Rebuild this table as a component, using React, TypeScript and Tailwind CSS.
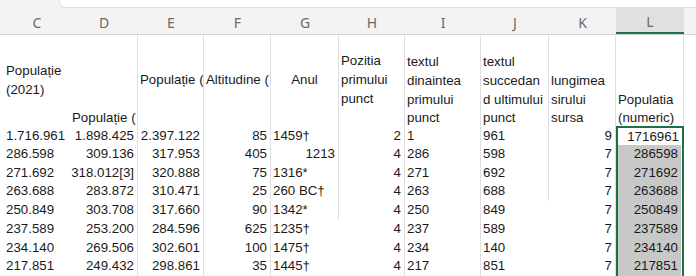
import React from "react";

type Align = "l" | "r" | "c";

// visible slice of the sheet: a sliver of B, then C..L, then the start of M
const colWidths = "grid-cols-[4px_66px_68px_66px_67px_68px_66px_76px_68px_67px_68px_1fr]";
const letters = ["", "C", "D", "E", "F", "G", "H", "I", "J", "K", "L", ""];

// default alignment for the data columns C..L
const colAlign: Align[] = ["l", "r", "r", "r", "l", "r", "l", "l", "r", "r"];

const rows: string[][] = [
  ["1.716.961", "1.898.425", "2.397.122", "85", "1459†", "2", "1", "961", "9", "1716961"],
  ["286.598", "309.136", "317.953", "405", "1213", "4", "286", "598", "7", "286598"],
  ["271.692", "318.012[3]", "320.888", "75", "1316*", "4", "271", "692", "7", "271692"],
  ["263.688", "283.872", "310.471", "25", "260 BC†", "4", "263", "688", "7", "263688"],
  ["250.849", "303.708", "317.660", "90", "1342*", "4", "250", "849", "7", "250849"],
  ["237.589", "253.200", "284.596", "625", "1235†", "4", "237", "589", "7", "237589"],
  ["234.140", "269.506", "302.601", "100", "1475†", "4", "234", "140", "7", "234140"],
  ["217.851", "249.432", "298.861", "35", "1445†", "4", "217", "851", "7", "217851"],
];

type HeaderCell = { lines: string[]; v: "center" | "bottom"; align?: Align };

const headers: HeaderCell[] = [
  { lines: ["Populație", "(2021)"], v: "center" },
  { lines: ["Populație ("], v: "bottom" },
  { lines: ["Populație ("], v: "center" },
  { lines: ["Altitudine ("], v: "center" },
  { lines: ["Anul"], v: "center", align: "c" },
  { lines: ["Pozitia", "primului", "punct"], v: "center" },
  { lines: ["textul", "dinaintea", "primului", "punct"], v: "bottom" },
  { lines: ["textul", "succedan", "d ultimului", "punct"], v: "bottom" },
  { lines: ["lungimea", "sirului", "sursa"], v: "bottom" },
  { lines: ["Populatia", "(numeric)"], v: "bottom" },
];

const grid = "border-[#dfdfdf]";

// vertical gridline to the right of column index (0 = C); the C/D line is not drawn
function hasRightLine(col: number, row: number) {
  if (col === 0) return false;
  if (col === 4 && row >= 6) return false;
  if (col === 7 && row >= 5) return false;
  return true;
}

function justify(a: Align) {
  if (a === "r") return "justify-end pr-[3px]";
  if (a === "c") return "justify-center";
  return "justify-start pl-[2px]";
}

export default function App() {
  return (
    <div className="h-[276px] w-[696px] overflow-hidden bg-white font-['Liberation_Sans',Arial,sans-serif] text-[13.3px] leading-[18.7px] text-[#1a1a1a]">
      {/* formula bar edge */}
      <div className="flex h-[8px] bg-[#f3f3f3]">
        <div className="w-[59px]" />
        <div className="flex-1 rounded-bl-[6px] border-b border-l border-[#dedede] bg-white" />
      </div>

      {/* column letters */}
      <div className={`grid ${colWidths} h-[27px] border-b border-[#d2d2d2] bg-[#f3f3f3] font-['Noto_Sans',sans-serif] text-[14px] text-[#6a6a6a]`}>
        {letters.map((l, i) =>
          l === "L" ? (
            <div key={i} className="flex items-center justify-center border-b-2 border-[#1e7145] bg-[#e0e0e0] pt-[4px]">
              {l}
            </div>
          ) : (
            <div key={i} className="flex items-center justify-center pt-[4px]">
              {l}
            </div>
          )
        )}
      </div>

      {/* header row of the table */}
      <div className={`grid ${colWidths} h-[91px]`}>
        <div />
        {headers.map((h, i) => (
          <div
            key={i}
            className={`flex overflow-hidden whitespace-nowrap ${hasRightLine(i, 0) ? `border-r ${grid}` : ""} ${
              h.v === "bottom" ? "items-end" : "items-center"
            } ${h.align === "c" ? "justify-center" : "justify-start pl-[2px]"}`}
          >
            <div className={`${h.v === "bottom" ? "translate-y-[2px]" : ""} ${h.align === "c" ? "text-center" : ""}`}>
              {h.lines.map((line) => (
                <div key={line}>{line}</div>
              ))}
            </div>
          </div>
        ))}
        <div />
      </div>

      {/* data rows */}
      {rows.map((row, r) => (
        <div key={r} className={`grid ${colWidths} h-[18.75px]`}>
          <div />
          {row.map((value, c) => {
            const align: Align = c === 4 && value === "1213" ? "r" : colAlign[c];
            if (c === 9) {
              return (
                <div
                  key={c}
                  className={`flex border-x-2 border-[#1e7145] ${r === 0 ? "border-t-2 bg-white" : ""}`}
                >
                  <div className={`flex flex-1 items-center ${justify(align)} ${r === 0 ? "" : "mr-[1px] bg-[#c8c8c8] pr-[2px]"}`}>
                    {value}
                  </div>
                </div>
              );
            }
            return (
              <div
                key={c}
                className={`flex items-center whitespace-nowrap ${justify(align)} ${
                  hasRightLine(c, r + 1) ? `border-r ${grid}` : ""
                }`}
              >
                {value}
              </div>
            );
          })}
          <div />
        </div>
      ))}
    </div>
  );
}
